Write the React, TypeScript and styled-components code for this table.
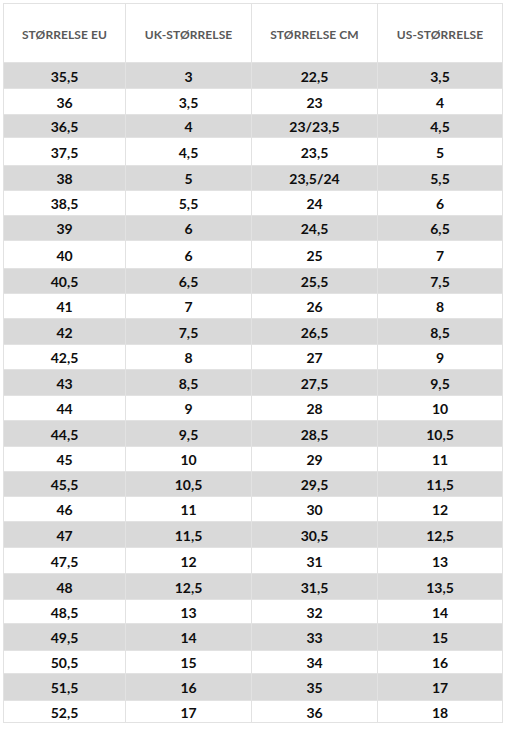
import React from "react";
import styled, { createGlobalStyle } from "styled-components";

const GlobalStyle = createGlobalStyle`
  html, body { margin: 0; padding: 0; background: #ffffff; }
  body { font-family: Lato, "Liberation Sans", Arial, sans-serif; }
`;

const Page = styled.div`
  padding: 3px 0 0 3px;
  width: 505px;
  box-sizing: border-box;
`;

const Table = styled.div`
  display: grid;
  grid-template-columns: 122px 126px 126px 125px;
  width: 500px;
  box-sizing: border-box;
  border-left: 1px solid #e2e2e2;
  border-top: 1px solid #e2e2e2;
`;

const HeadCell = styled.div`
  height: 59px;
  box-sizing: border-box;
  border-right: 1px solid #e2e2e2;
  border-bottom: 1px solid #e2e2e2;
  display: flex;
  align-items: center;
  justify-content: center;
  padding-top: 3px;
  font-size: 12px;
  font-weight: 700;
  color: #595959;
  letter-spacing: 0.1px;
  background: #ffffff;
`;

const Cell = styled.div<{ $shaded: boolean; $h: number }>`
  height: ${(p) => p.$h}px;
  box-sizing: border-box;
  border-right: 1px solid #e2e2e2;
  border-bottom: 1px solid #e2e2e2;
  display: flex;
  align-items: center;
  justify-content: center;
  padding-top: 1px;
  font-size: 14px;
  font-weight: 700;
  color: #0d0d0d;
  background: ${(p) => (p.$shaded ? "#d9d9d9" : "#ffffff")};
`;

const headers = ["STØRRELSE EU", "UK-STØRRELSE", "STØRRELSE CM", "US-STØRRELSE"];

const rows: [string, string, string, string][] = [
  ["35,5", "3", "22,5", "3,5"],
  ["36", "3,5", "23", "4"],
  ["36,5", "4", "23/23,5", "4,5"],
  ["37,5", "4,5", "23,5", "5"],
  ["38", "5", "23,5/24", "5,5"],
  ["38,5", "5,5", "24", "6"],
  ["39", "6", "24,5", "6,5"],
  ["40", "6", "25", "7"],
  ["40,5", "6,5", "25,5", "7,5"],
  ["41", "7", "26", "8"],
  ["42", "7,5", "26,5", "8,5"],
  ["42,5", "8", "27", "9"],
  ["43", "8,5", "27,5", "9,5"],
  ["44", "9", "28", "10"],
  ["44,5", "9,5", "28,5", "10,5"],
  ["45", "10", "29", "11"],
  ["45,5", "10,5", "29,5", "11,5"],
  ["46", "11", "30", "12"],
  ["47", "11,5", "30,5", "12,5"],
  ["47,5", "12", "31", "13"],
  ["48", "12,5", "31,5", "13,5"],
  ["48,5", "13", "32", "14"],
  ["49,5", "14", "33", "15"],
  ["50,5", "15", "34", "16"],
  ["51,5", "16", "35", "17"],
  ["52,5", "17", "36", "18"],
];

const heights = [26, 26, 23, 28, 25, 25, 25, 28, 25, 25, 26, 25, 26, 25, 26, 25, 25, 25, 26, 26, 26, 24, 27, 23, 27, 22];

export default function App() {
  return (
    <Page>
      <GlobalStyle />
      <Table>
        {headers.map((h) => (
          <HeadCell key={h}>{h}</HeadCell>
        ))}
        {rows.map((r, i) =>
          r.map((v, j) => (
            <Cell key={`${i}-${j}`} $shaded={i % 2 === 0} $h={heights[i]}>
              {v}
            </Cell>
          ))
        )}
      </Table>
    </Page>
  );
}
